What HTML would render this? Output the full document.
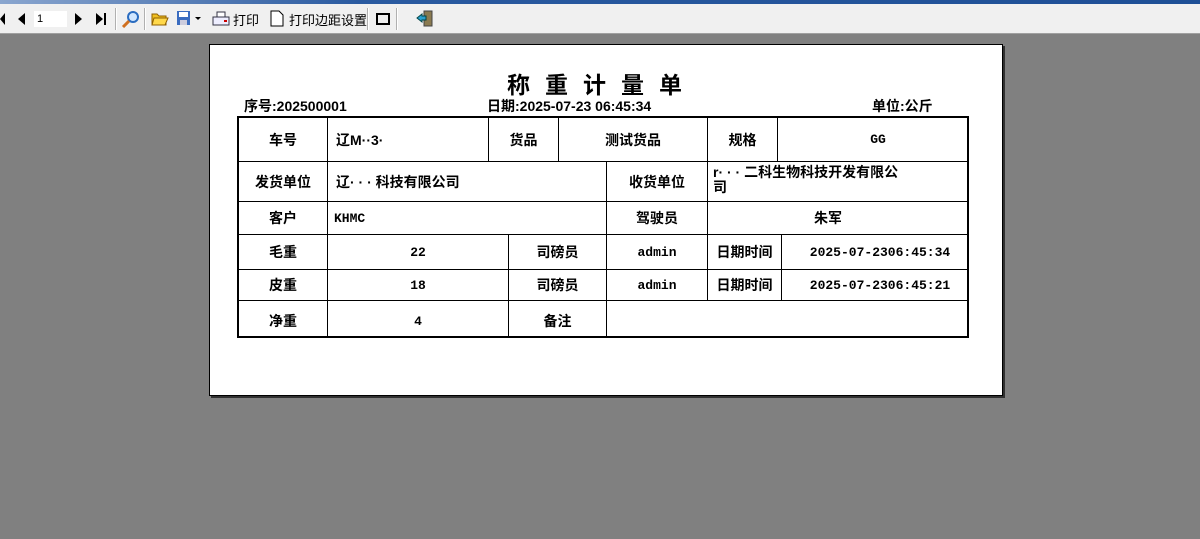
<!DOCTYPE html>
<html><head><meta charset="utf-8"><style>
body{margin:0;width:1200px;height:539px;background:#808080;position:relative;overflow:hidden;font-family:"Liberation Sans","Noto Sans CJK SC","WenQuanYi Zen Hei",sans-serif;}
.tb{position:absolute;left:0;top:0;width:1200px;height:33px;background:#f0f0f0;border-bottom:1px solid #a0a0a0}
.tb .blue{position:absolute;left:0;top:0;width:1200px;height:4px;background:linear-gradient(90deg,#8aa6cf,#2a5aa0 30%,#1e4f96)}
.tb .t{position:absolute;top:10px;font-size:13px;color:#000}
.sep{position:absolute;top:8px;width:1px;height:22px;background:#b0b0b0;border-right:1px solid #fff}
.page{position:absolute;left:209px;top:44px;width:792px;height:350px;background:#fff;border:1px solid #000;box-shadow:2px 2px 0 #303030}
.a{position:absolute;white-space:nowrap;color:#000}
.c{position:absolute;border-right:1px solid #000;border-bottom:1px solid #000;box-sizing:border-box;display:flex;align-items:center;justify-content:center;font-size:14px;font-weight:bold;color:#000}
.m{font-family:"Liberation Mono","DejaVu Sans Mono",monospace;font-weight:bold;font-size:13px}
</style></head><body>
<div class="tb"><div class="blue"></div>
<svg style="position:absolute;left:0;top:11px" width="110" height="16"><polygon points="5,2 0,8 5,14" fill="#000"/><polygon points="25,2 18,8 25,14" fill="#000"/><polygon points="75,2 82,8 75,14" fill="#000"/><polygon points="96,2 103,8 96,14" fill="#000"/><rect x="104" y="2" width="2" height="12" fill="#000"/></svg>
<div style="position:absolute;left:34px;top:11px;width:30px;height:16px;background:#fff;font-size:11px;line-height:16px;padding-left:3px">1</div>
<div class="sep" style="left:115px"></div>
<svg style="position:absolute;left:121px;top:10px" width="20" height="18"><circle cx="12" cy="7" r="5" fill="#cfe6ff" stroke="#2a6cc0" stroke-width="2"/><line x1="8" y1="11" x2="2" y2="17" stroke="#d07020" stroke-width="3"/></svg>
<div class="sep" style="left:144px"></div>
<svg style="position:absolute;left:151px;top:11px" width="18" height="15"><path d="M1 3h5l2 2h7v9H1z" fill="#f0c020" stroke="#906000"/><path d="M3 7h14l-3 7H1z" fill="#ffd84a" stroke="#906000"/></svg>
<svg style="position:absolute;left:176px;top:10px" width="26" height="16"><rect x="1" y="1" width="13" height="14" fill="#3a6cc0"/><rect x="3" y="2" width="9" height="5" fill="#fff"/><rect x="4" y="10" width="7" height="5" fill="#ccd"/><polygon points="19,7 25,7 22,10" fill="#000"/></svg>
<svg style="position:absolute;left:212px;top:11px" width="18" height="15"><rect x="1" y="6" width="16" height="8" fill="#eef" stroke="#334"/><path d="M5 1h8v5H5z" fill="#fff" stroke="#334"/><rect x="12" y="9" width="3" height="2" fill="#c00"/></svg>
<div class="t" style="left:233px">打印</div>
<svg style="position:absolute;left:270px;top:10px" width="14" height="17"><path d="M1 1h8l4 4v11H1z" fill="#fff" stroke="#000"/></svg>
<div class="t" style="left:289px">打印边距设置</div>
<div class="sep" style="left:367px"></div>
<div style="position:absolute;left:376px;top:13px;width:10px;height:8px;border:2px solid #000"></div>
<div class="sep" style="left:396px"></div>
<svg style="position:absolute;left:416px;top:10px" width="18" height="17"><rect x="8" y="1" width="8" height="15" fill="#8a7a50" stroke="#444"/><polygon points="1,8 6,4 6,6 10,6 10,10 6,10 6,12" fill="#2aa0d0" stroke="#044"/></svg>
</div>
<div class="page">
<div class="a" style="left:297px;top:21px;font-size:23px;font-weight:bold;letter-spacing:15px">称重计量单</div>
<div class="a" style="left:34px;top:51px;font-size:14px;font-weight:bold">序号:202500001</div>
<div class="a" style="left:277px;top:51px;font-size:14px;font-weight:bold">日期:2025-07-23 06:45:34</div>
<div class="a" style="left:662px;top:51px;font-size:14px;font-weight:bold">单位:公斤</div>
<div style="position:absolute;left:27px;top:71px;width:732px;height:222px;border:2px solid #000;box-sizing:border-box;overflow:hidden">
<div class="c" style="left:0;top:0;width:89px;height:44px">车号</div>
<div class="c" style="left:89px;top:0;width:161px;height:44px;justify-content:flex-start;padding-left:8px">辽M··3·</div>
<div class="c" style="left:250px;top:0;width:70px;height:44px">货品</div>
<div class="c" style="left:320px;top:0;width:149px;height:44px">测试货品</div>
<div class="c" style="left:469px;top:0;width:70px;height:44px">规格</div>
<div class="c m" style="left:539px;top:0;width:200px;height:44px;border-right:0">GG</div>
<div class="c" style="left:0;top:44px;width:89px;height:40px">发货单位</div>
<div class="c" style="left:89px;top:44px;width:279px;height:40px;justify-content:flex-start;padding-left:8px">辽· · · 科技有限公司</div>
<div class="c" style="left:368px;top:44px;width:101px;height:40px">收货单位</div>
<div class="c" style="left:469px;top:44px;width:270px;height:40px;border-right:0;justify-content:flex-start;align-items:flex-start;padding-left:5px;line-height:15px;padding-top:3px;white-space:normal">r· · · 二科生物科技开发有限公<br>司</div>
<div class="c" style="left:0;top:84px;width:89px;height:33px">客户</div>
<div class="c m" style="left:89px;top:84px;width:279px;height:33px;justify-content:flex-start;padding-left:6px">KHMC</div>
<div class="c" style="left:368px;top:84px;width:101px;height:33px">驾驶员</div>
<div class="c" style="left:469px;top:84px;width:270px;height:33px;border-right:0;padding-right:30px">朱军</div>
<div class="c" style="left:0;top:117px;width:89px;height:35px">毛重</div>
<div class="c m" style="left:89px;top:117px;width:181px;height:35px">22</div>
<div class="c" style="left:270px;top:117px;width:98px;height:35px">司磅员</div>
<div class="c m" style="left:368px;top:117px;width:101px;height:35px">admin</div>
<div class="c" style="left:469px;top:117px;width:74px;height:35px">日期时间</div>
<div class="c m" style="left:543px;top:117px;width:196px;height:35px;border-right:0">2025-07-2306:45:34</div>
<div class="c" style="left:0;top:152px;width:89px;height:31px">皮重</div>
<div class="c m" style="left:89px;top:152px;width:181px;height:31px">18</div>
<div class="c" style="left:270px;top:152px;width:98px;height:31px">司磅员</div>
<div class="c m" style="left:368px;top:152px;width:101px;height:31px">admin</div>
<div class="c" style="left:469px;top:152px;width:74px;height:31px">日期时间</div>
<div class="c m" style="left:543px;top:152px;width:196px;height:31px;border-right:0">2025-07-2306:45:21</div>
<div class="c" style="left:0;top:183px;width:89px;height:40px;border-bottom:0">净重</div>
<div class="c m" style="left:89px;top:183px;width:181px;height:40px;border-bottom:0">4</div>
<div class="c" style="left:270px;top:183px;width:98px;height:40px;border-bottom:0">备注</div>
<div class="c" style="left:368px;top:183px;width:371px;height:40px;border:0"></div>
</div>
</div>
</body></html>
